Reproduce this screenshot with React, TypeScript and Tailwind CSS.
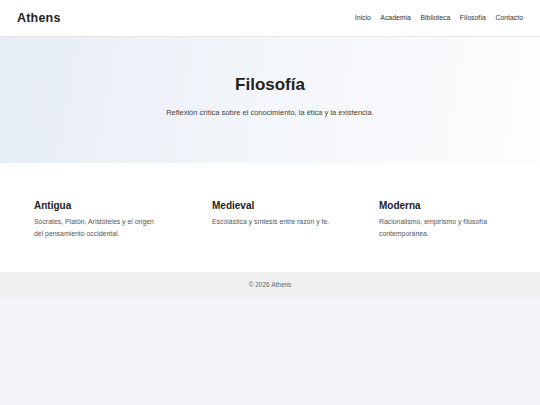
import React from "react";

const links = ["Inicio", "Academia", "Biblioteca", "Filosofía", "Contacto"];

const eras = [
  { title: "Antigua", text: "Sócrates, Platón, Aristóteles y el origen del pensamiento occidental." },
  { title: "Medieval", text: "Escolástica y síntesis entre razón y fe." },
  { title: "Moderna", text: "Racionalismo, empirismo y filosofía contemporánea." },
];

export default function App() {
  return (
    <div className="min-h-[405px] bg-[#f4f5f9] font-['Liberation_Sans',Arial,sans-serif] text-[#222]">
      {/* Header */}
      <header className="flex h-[37px] items-center justify-between border-b border-[#e8e8e8] bg-white px-[17px]">
        <span className="text-[12.5px] font-bold tracking-[0.2px] text-[#222]">Athens</span>
        <nav className="flex gap-[9.5px] text-[6.9px] text-[#333]">
          {links.map((l) => (
            <a key={l} href="#">{l}</a>
          ))}
        </nav>
      </header>

      {/* Hero */}
      <section className="flex h-[126px] flex-col items-center bg-[linear-gradient(100deg,#e7edf6_0%,#f3f6fa_50%,#fdfdfe_100%)] pt-[37px]">
        <h1 className="text-[17px] font-bold leading-[22px] text-[#222]">Filosofía</h1>
        <p className="mt-[11px] text-[7.5px] leading-[12px] text-[#444]">
          Reflexión crítica sobre el conocimiento, la ética y la existencia.
        </p>
      </section>

      {/* Eras */}
      <section className="grid h-[109px] grid-cols-[178px_167px_1fr] bg-white px-[34px] pt-[36px]">
        {eras.map((e) => (
          <div key={e.title}>
            <h3 className="text-[10px] font-bold leading-[14px] text-[#222]">{e.title}</h3>
            <p className="mt-[3px] max-w-[128px] text-[6.9px] leading-[12px] text-[#555]">{e.text}</p>
          </div>
        ))}
      </section>

      {/* Footer */}
      <footer className="flex h-[26px] items-center justify-center bg-[#f0f0f0] text-[6.5px] text-[#666]">
        © 2026 Athens
      </footer>
    </div>
  );
}
